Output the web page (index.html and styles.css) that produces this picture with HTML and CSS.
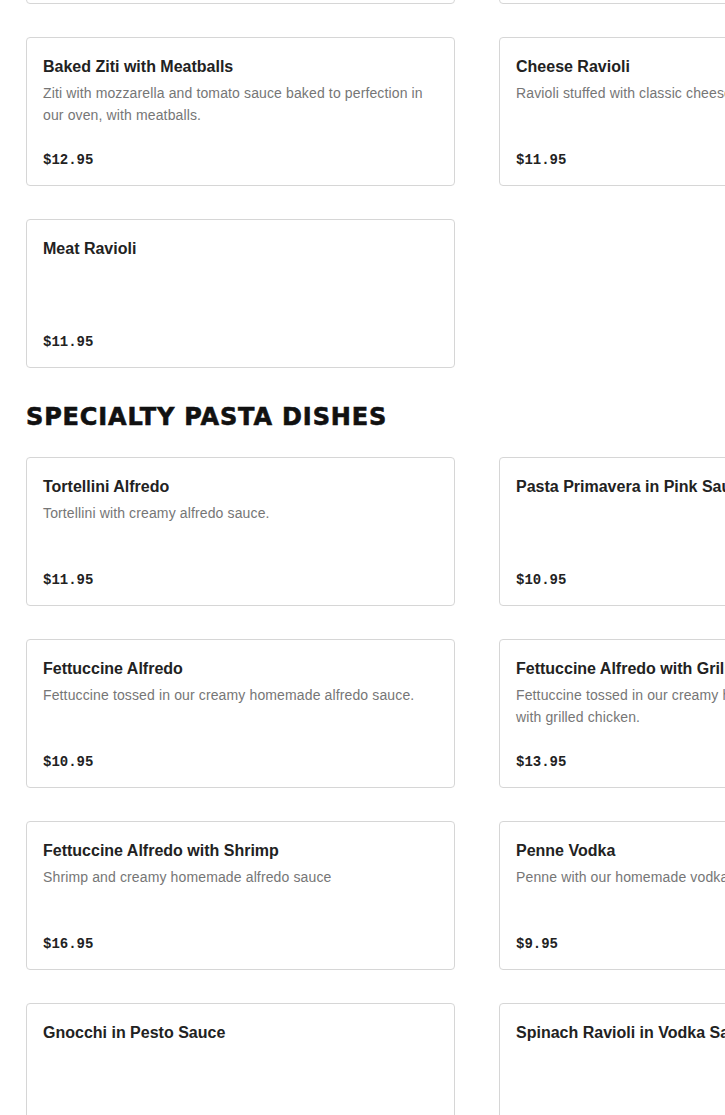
FILE: index.html
```html
<!DOCTYPE html>
<html lang="en">
<head>
<meta charset="utf-8">
<title>Menu</title>
<link rel="stylesheet" href="styles.css">
</head>
<body>
<main class="menu">
  <section class="section section-prev">
    <div class="grid">
      <article class="card"><h3 class="title">&nbsp;</h3><p class="desc"></p><p class="price">&nbsp;</p></article>
      <article class="card"><h3 class="title">&nbsp;</h3><p class="desc"></p><p class="price">&nbsp;</p></article>
      <article class="card">
        <h3 class="title">Baked Ziti with Meatballs</h3>
        <p class="desc">Ziti with mozzarella and tomato sauce baked to perfection in our oven, with meatballs.</p>
        <p class="price">$12.95</p>
      </article>
      <article class="card">
        <h3 class="title">Cheese Ravioli</h3>
        <p class="desc">Ravioli stuffed with classic cheese filling.</p>
        <p class="price">$11.95</p>
      </article>
      <article class="card">
        <h3 class="title">Meat Ravioli</h3>
        <p class="desc"></p>
        <p class="price">$11.95</p>
      </article>
    </div>
  </section>

  <section class="section">
    <h2 class="section-title">SPECIALTY PASTA DISHES</h2>
    <div class="grid">
      <article class="card">
        <h3 class="title">Tortellini Alfredo</h3>
        <p class="desc">Tortellini with creamy alfredo sauce.</p>
        <p class="price">$11.95</p>
      </article>
      <article class="card">
        <h3 class="title">Pasta Primavera in Pink Sauce</h3>
        <p class="desc"></p>
        <p class="price">$10.95</p>
      </article>
      <article class="card">
        <h3 class="title">Fettuccine Alfredo</h3>
        <p class="desc">Fettuccine tossed in our creamy homemade alfredo sauce.</p>
        <p class="price">$10.95</p>
      </article>
      <article class="card">
        <h3 class="title">Fettuccine Alfredo with Grilled Chicken</h3>
        <p class="desc">Fettuccine tossed in our creamy homemade alfredo sauce with grilled chicken.</p>
        <p class="price">$13.95</p>
      </article>
      <article class="card">
        <h3 class="title">Fettuccine Alfredo with Shrimp</h3>
        <p class="desc">Shrimp and creamy homemade alfredo sauce</p>
        <p class="price">$16.95</p>
      </article>
      <article class="card">
        <h3 class="title">Penne Vodka</h3>
        <p class="desc">Penne with our homemade vodka sauce.</p>
        <p class="price">$9.95</p>
      </article>
      <article class="card">
        <h3 class="title">Gnocchi in Pesto Sauce</h3>
        <p class="desc"></p>
        <p class="price">$11.95</p>
      </article>
      <article class="card">
        <h3 class="title">Spinach Ravioli in Vodka Sauce</h3>
        <p class="desc"></p>
        <p class="price">$12.95</p>
      </article>
    </div>
  </section>
</main>
</body>
</html>
```
FILE: styles.css
```css
html, body {
  margin: 0;
  padding: 0;
  overflow: hidden;
  background: #ffffff;
}

body {
  font-family: "Liberation Sans", Arial, sans-serif;
  color: #222222;
}

.menu {
  padding: 0 0 0 26px;
  width: 902px;
  margin-top: -145px;
}

.section-prev {
  margin-bottom: 35px;
}

.section-title {
  margin: 0 0 26px 0;
  font-family: "DejaVu Sans", "Liberation Sans", sans-serif;
  font-weight: 700;
  font-size: 24px;
  line-height: 28px;
  letter-spacing: 0.85px;
  -webkit-text-stroke: 0.6px #111111;
  color: #111111;
}

.grid {
  display: grid;
  grid-template-columns: 429px 429px;
  gap: 33px 44px;
}

.card {
  box-sizing: border-box;
  height: 149px;
  border: 1px solid #d6d6d6;
  border-radius: 4px;
  padding: 17px 16px 15px 16px;
  display: flex;
  flex-direction: column;
  background: #fff;
}

.title {
  margin: 0;
  font-size: 16px;
  line-height: 24px;
  font-weight: 700;
  color: #222222;
  white-space: nowrap;
}

.desc {
  margin: 3px 0 0 0;
  font-size: 14px;
  line-height: 22px;
  letter-spacing: 0.13px;
  color: #767676;
}

.price {
  margin: auto 0 0 0;
  font-family: "Liberation Mono", "Courier New", monospace;
  font-weight: 700;
  font-size: 14px;
  line-height: 20px;
  color: #222222;
}
```
